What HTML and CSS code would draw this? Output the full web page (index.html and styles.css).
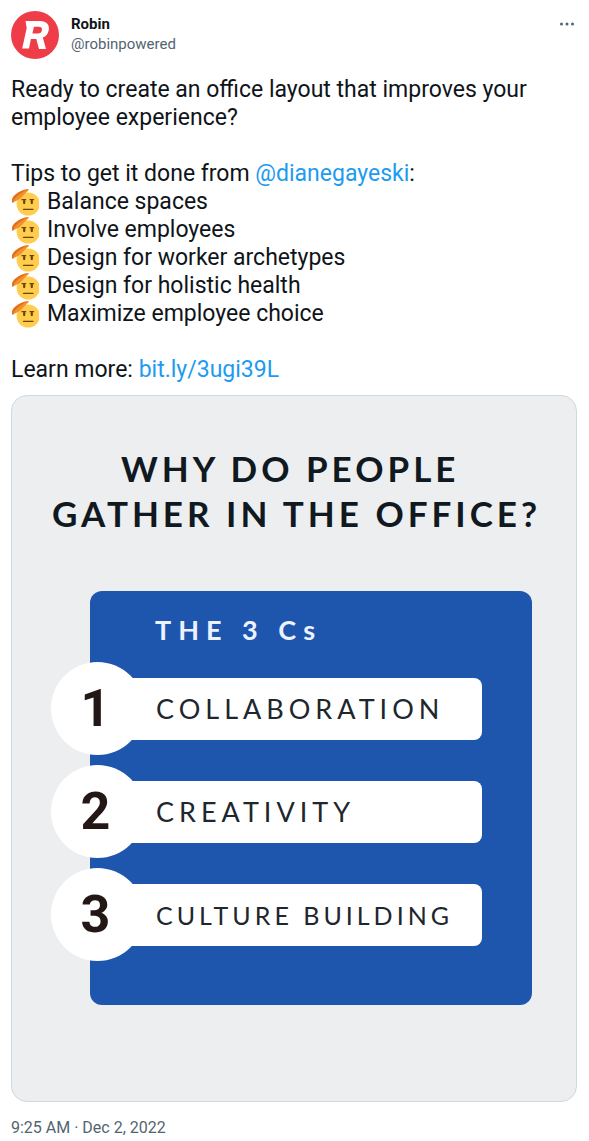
FILE: index.html
```html
<!DOCTYPE html>
<html lang="en">
<head>
<meta charset="utf-8">
<meta name="viewport" content="width=device-width, initial-scale=1">
<title>Robin (@robinpowered)</title>
<link rel="stylesheet" href="styles.css">
</head>
<body>
<svg class="defs" aria-hidden="true">
  <symbol id="salute" viewBox="0 0 28 28">
    <circle cx="17.200" cy="16" r="11.600" fill="#ffcc4d"/>
    <path d="M11 11.700h3.600M19 11.700h3.600" stroke="#664500" stroke-width="1.300" stroke-linecap="round"/>
    <ellipse cx="13.200" cy="14" rx="1.200" ry="2.300" fill="#664500"/>
    <ellipse cx="20.800" cy="14" rx="1.200" ry="2.300" fill="#664500"/>
    <path d="M12.500 21.300h9.500" stroke="#664500" stroke-width="1.200" stroke-linecap="round"/>
    <path d="M1.200 14.800C.6 12 1.300 9.300 4 7c3.200-2.800 7.600-5 12.400-5.900 1.600-.3 2 .7.900 1.500-1.900 1.500-3.400 3.200-5.300 5.200-2.300 2.500-4.300 4.200-6.900 5.200z" fill="#f4902d"/>
    <path d="M1.200 14.800C.6 12 1.300 9.300 4 7c3.200-2.800 7.600-5 12.400-5.900L8 6.700C5 8.700 3 10.800 2.700 14z" fill="#e0701c"/>
  </symbol>
</svg>
<article class="tweet">
  <header class="author">
    <svg class="avatar" viewBox="0 0 48 48" role="img" aria-label="Robin logo">
      <circle cx="24" cy="24" r="24" fill="#ee3d48"/>
      <path fill="#fff" fill-rule="evenodd" d="M14.500 10H29c6.500 0 9.700 3.600 8.800 9-.6 3.800-2.700 6.300-6 7.600L35 38h-7l-2.700-10h-5.400L18 37.500h-6.800l4.500-20.600zM22.900 15.800 21.400 22.500h5.400c2.400 0 3.700-1 4.100-3.300.4-2.300-.7-3.400-3.100-3.400z"/>
    </svg>
    <div class="names">
      <a class="name" href="#robin">Robin</a>
      <a class="handle" href="#robin">@robinpowered</a>
    </div>
    <button class="more" type="button" aria-label="More">
      <svg class="dots" viewBox="0 0 16 4" fill="#536471"><circle cx="2.500" cy="2" r="1.500"/><circle cx="8" cy="2" r="1.500"/><circle cx="13.500" cy="2" r="1.500"/></svg>
    </button>
  </header>
  <div class="body">
    <p>Ready to create an office layout that improves your employee experience?</p>
    <div>
      <p>Tips to get it done from <a class="link" href="#dianegayeski">@dianegayeski</a>:</p>
      <ul class="tips">
        <li><svg class="emoji" aria-hidden="true"><use href="#salute"/></svg>Balance spaces</li>
        <li><svg class="emoji" aria-hidden="true"><use href="#salute"/></svg>Involve employees</li>
        <li><svg class="emoji" aria-hidden="true"><use href="#salute"/></svg>Design for worker archetypes</li>
        <li><svg class="emoji" aria-hidden="true"><use href="#salute"/></svg>Design for holistic health</li>
        <li><svg class="emoji" aria-hidden="true"><use href="#salute"/></svg>Maximize employee choice</li>
      </ul>
    </div>
    <p>Learn more: <a class="link" href="#more">bit.ly/3ugi39L</a></p>
  </div>
  <section class="card">
    <h1 class="title">WHY DO PEOPLE&nbsp;<br>GATHER IN THE OFFICE?</h1>
    <div class="panel">
      <h2 class="subtitle">THE 3 Cs</h2>
      <ol class="reasons">
        <li class="reason"><span class="number">1</span><span class="label">COLLABORATION</span></li>
        <li class="reason"><span class="number">2</span><span class="label">CREATIVITY</span></li>
        <li class="reason"><span class="number">3</span><span class="label label-long">CULTURE BUILDING</span></li>
      </ol>
    </div>
  </section>
  <time class="time" datetime="2022-12-02T09:25">9:25 AM · Dec 2, 2022</time>
</article>
</body>
</html>
```
FILE: styles.css
```css
* { box-sizing: border-box; }

body {
  margin: 0;
  background: #fff;
  color: #0f1419;
  font-family: Roboto, "Liberation Sans", sans-serif;
}

h1, h2, p, ul, ol { margin: 0; padding: 0; }
ul, ol { list-style: none; }
a { text-decoration: none; }

.defs { position: absolute; width: 0; height: 0; }

.tweet {
  display: flex;
  flex-direction: column;
  padding: 11px 12px 4px 11px;
}

.author { display: flex; align-items: flex-start; gap: 12px; }
.avatar { width: 48px; height: 48px; flex: none; }
.names {
  display: flex;
  flex: 1;
  flex-direction: column;
  padding-top: 3px;
  font-size: 15px;
  line-height: 20px;
}
.name { color: #0f1419; font-weight: 700; }
.handle { color: #536471; }
.more {
  display: flex;
  padding: 11px 2px;
  border: 0;
  background: none;
  cursor: pointer;
}
.dots { width: 16px; height: 4px; }

.body {
  display: flex;
  flex-direction: column;
  gap: 28px;
  padding: 17px 0 11px;
  font-size: 23px;
  line-height: 28px;
}
.link { color: #1d9bf0; }
.tips li { display: flex; align-items: center; gap: 8px; }
.emoji { width: 28px; height: 28px; flex: none; }

.card {
  padding: 50px 44px 96px 37px;
  border: 1px solid #cfd9de;
  border-radius: 16px;
  background: #edeef0;
  font-family: Lato, "Liberation Sans", sans-serif;
}
.title {
  margin-right: -12px;
  color: #101820;
  font-size: 35px;
  font-weight: 700;
  line-height: 45px;
  letter-spacing: 4px;
  text-align: center;
  white-space: nowrap;
}
.panel {
  margin: 55px 0 0 41px;
  padding: 23px 50px 44px 0;
  border-radius: 12px;
  background: #1e56ad;
}
.subtitle {
  padding-left: 65px;
  color: #edf2ff;
  font-size: 27px;
  font-weight: 700;
  line-height: 32px;
  letter-spacing: 7px;
}
.reasons {
  display: flex;
  flex-direction: column;
  gap: 10px;
  margin: 16px 0 0 -39px;
}
.reason { display: flex; align-items: center; }
.number {
  display: flex;
  flex: none;
  align-items: center;
  justify-content: center;
  width: 93px;
  height: 93px;
  padding-right: 4px;
  border-radius: 50%;
  background: #fff;
  color: #231815;
  font-family: Roboto, sans-serif;
  font-size: 52px;
  font-weight: 700;
}
.label {
  flex: 1;
  margin-left: -24px;
  padding-left: 36px;
  border-radius: 8px;
  background: #fff;
  color: #20262d;
  font-size: 27px;
  line-height: 62px;
  letter-spacing: 5px;
  white-space: nowrap;
}
.label-long { font-size: 25px; letter-spacing: 4px; }

.time {
  padding-top: 16px;
  color: #536471;
  font-size: 16px;
  line-height: 20px;
}
```
